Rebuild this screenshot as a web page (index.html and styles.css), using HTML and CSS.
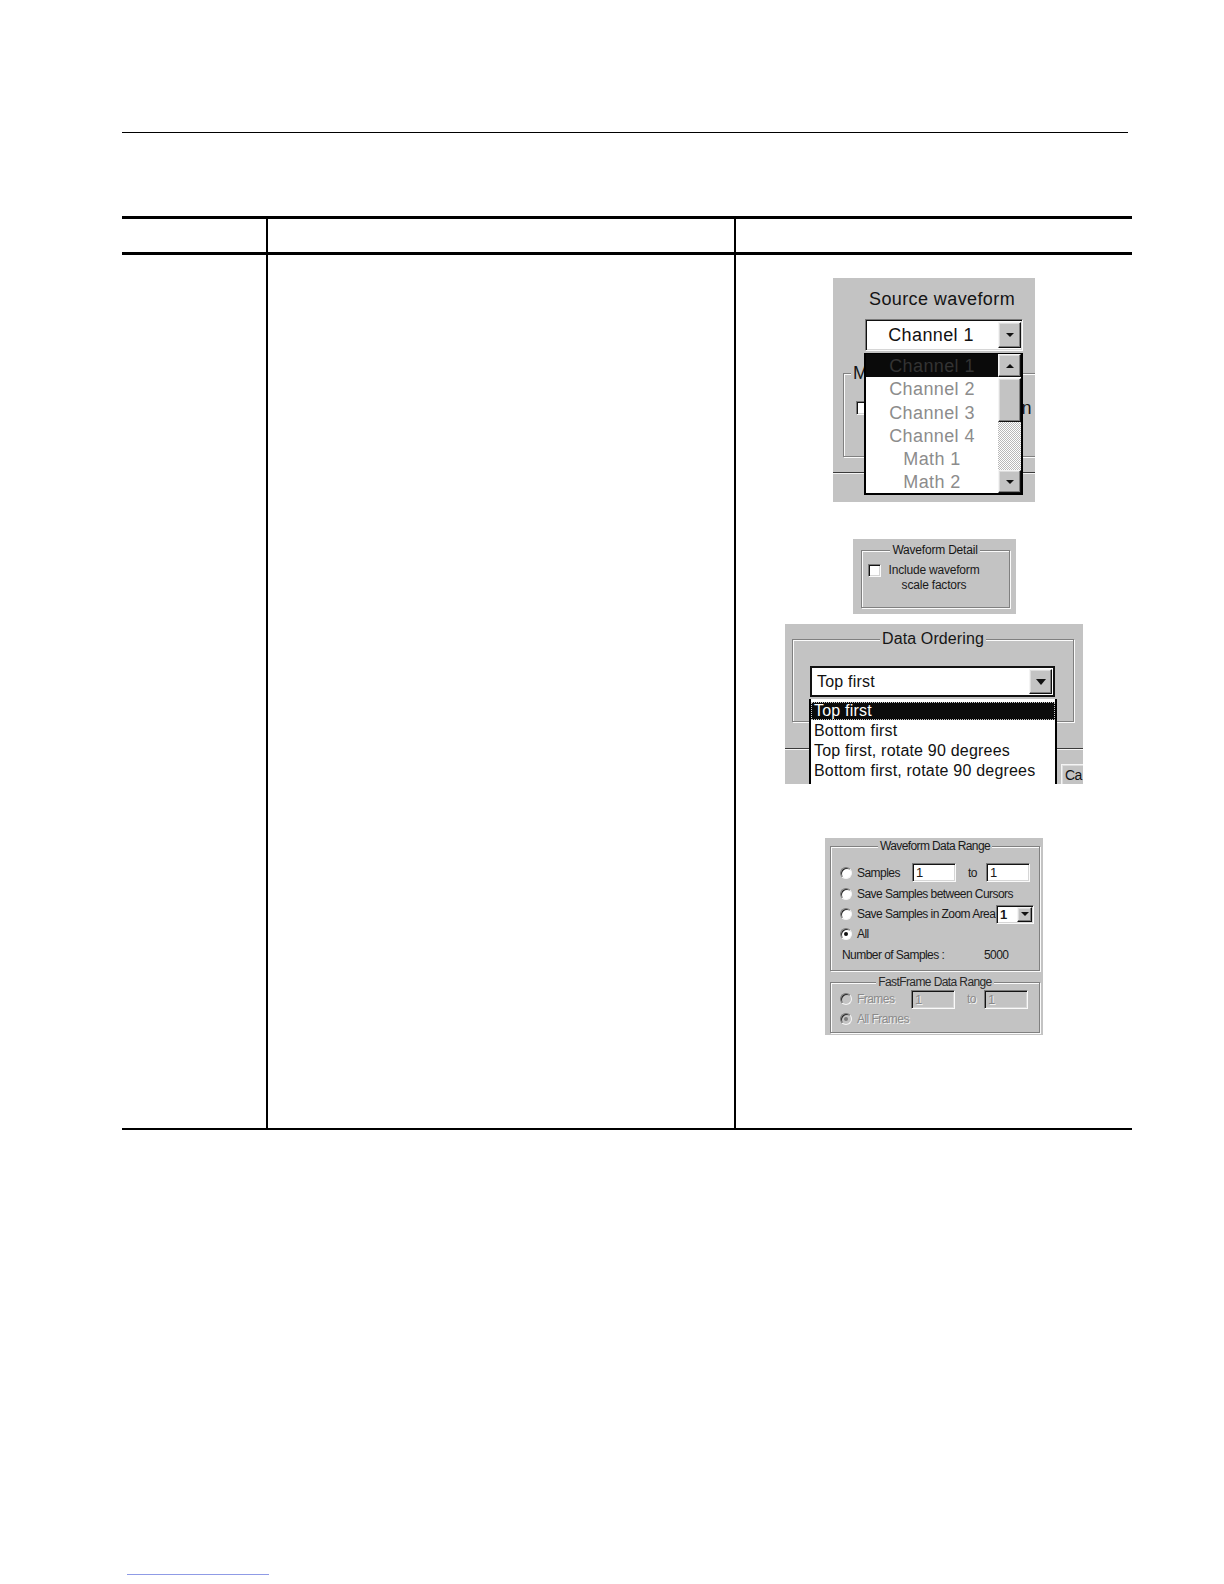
FILE: index.html
```html
<!DOCTYPE html>
<html>
<head>
<meta charset="utf-8">
<title>Save waveform dialog</title>
<link rel="stylesheet" href="styles.css">
</head>
<body>
<div class="page">
  <div class="rule-top"></div>
  <div class="table">
    <div class="row thead">
      <div class="c1"></div>
      <div class="c2"></div>
      <div class="c3"></div>
    </div>
    <div class="row tbody">
      <div class="c1"></div>
      <div class="c2"></div>
      <div class="c3 figs">

        <div class="fig fig1">
          <div class="f1-title">Source waveform</div>
          <div class="combo combo1">
            <div class="combo1-text">Channel 1</div>
            <div class="btn combo1-btn"><span class="arrow-down"></span></div>
          </div>
          <div class="grp grp1">
            <div class="grp1-legend">M</div>
            <div class="grp1-row"><span class="check check1"></span><span class="grp1-tail">n</span></div>
          </div>
          <div class="sep sep1"></div>
          <div class="list1">
            <div class="list1-items">
              <div class="l1-item sel">Channel 1</div>
              <div class="l1-item">Channel 2</div>
              <div class="l1-item">Channel 3</div>
              <div class="l1-item">Channel 4</div>
              <div class="l1-item">Math 1</div>
              <div class="l1-item">Math 2</div>
            </div>
            <div class="sbar">
              <div class="btn sbtn"><span class="arrow-up"></span></div>
              <div class="btn sthumb"></div>
              <div class="strack"></div>
              <div class="btn sbtn sbtn-down"><span class="arrow-down"></span></div>
            </div>
          </div>
        </div>

        <div class="fig fig2">
          <div class="grp grp2">
            <div class="legend l12">Waveform Detail</div>
            <div class="grp2-row">
              <span class="check check2"></span>
              <span class="grp2-text">Include waveform<br>scale factors</span>
            </div>
          </div>
        </div>

        <div class="fig fig3">
          <div class="grp grp3">
            <div class="legend l16">Data Ordering</div>
            <div class="combo3">
              <div class="combo3-text">Top first</div>
              <div class="btn combo3-btn"><span class="arrow-down big"></span></div>
            </div>
          </div>
          <div class="sep sep3"></div>
          <div class="fig3-bottom"><div class="btn cbtn">Ca</div></div>
          <div class="list3">
            <div class="l3-item sel">Top first</div>
            <div class="l3-item">Bottom first</div>
            <div class="l3-item">Top first, rotate 90 degrees</div>
            <div class="l3-item">Bottom first, rotate 90 degrees</div>
          </div>
        </div>

        <div class="fig fig4">
          <div class="grp grp4a">
            <div class="legend l12n">Waveform Data Range</div>
            <div class="r4 r4-first">
              <span class="radio"></span><span class="lbl lbl-samples">Samples</span>
              <span class="inp">1</span><span class="to">to</span><span class="inp">1</span>
            </div>
            <div class="r4"><span class="radio"></span><span class="lbl">Save Samples between Cursors</span></div>
            <div class="r4">
              <span class="radio"></span><span class="lbl lbl-zoom">Save Samples in Zoom Area</span>
              <span class="combo combo4"><span class="combo4-text">1</span><span class="btn combo4-btn"><span class="arrow-down"></span></span></span>
            </div>
            <div class="r4"><span class="radio on"></span><span class="lbl">All</span></div>
            <div class="r4 r4-num"><span class="numlbl">Number of Samples :</span><span class="numval">5000</span></div>
          </div>
          <div class="grp grp4b">
            <div class="legend l12n legend-b">FastFrame Data Range</div>
            <div class="r4b">
              <span class="radio dis"></span><span class="lbl lbl-frames dis-text">Frames</span>
              <span class="inp dis dis-text">1</span><span class="to to-b dis-text">to</span><span class="inp dis dis-text">1</span>
            </div>
            <div class="r4b"><span class="radio dis on"></span><span class="lbl dis-text">All Frames</span></div>
          </div>
        </div>

      </div>
    </div>
  </div>
  <div class="foot-line"></div>
</div>
</body>
</html>
```

FILE: styles.css
```css
html, body {
  margin: 0;
  padding: 0;
  background: #ffffff;
}

body {
  font-family: "Liberation Sans", Arial, sans-serif;
  color: #161616;
}

.page {
  width: 1224px;
  height: 1584px;
  overflow: hidden;
  padding-top: 132px;
  box-sizing: border-box;
}

.rule-top {
  margin-left: 122px;
  width: 1006px;
  height: 1px;
  background: #000;
}

.table {
  margin: 83px 0 0 122px;
  width: 1010px;
  border-top: 3px solid #000;
  border-bottom: 2px solid #000;
}

.row {
  display: grid;
  grid-template-columns: 144px 468px 398px;
}

.thead {
  height: 33px;
  border-bottom: 3px solid #000;
}

.tbody {
  height: 873px;
}

.c2, .c3 {
  border-left: 2px solid #000;
}

/* figures column */
.figs {
  display: flex;
  flex-direction: column;
  align-items: center;
  padding-top: 23px;
}

.fig {
  background: #c3c3c3;
  box-sizing: border-box;
  flex: none;
}

/* generic win controls */
.btn {
  background: #c3c3c3;
  box-sizing: border-box;
  border: 1px solid;
  border-color: #f4f4f4 #101010 #101010 #f4f4f4;
  box-shadow: inset -1px -1px #7e7e7e, inset 1px 1px #dcdcdc;
  display: flex;
  align-items: center;
  justify-content: center;
}

.arrow-down {
  width: 0;
  height: 0;
  border-left: 4px solid transparent;
  border-right: 4px solid transparent;
  border-top: 4px solid #111;
}

.arrow-down.big {
  border-left-width: 5px;
  border-right-width: 5px;
  border-top-width: 6px;
}

.arrow-up {
  width: 0;
  height: 0;
  border-left: 4px solid transparent;
  border-right: 4px solid transparent;
  border-bottom: 4px solid #111;
}

.combo {
  display: flex;
  box-sizing: border-box;
  background: #fff;
  border: 1px solid;
  border-color: #7a7a7a #fafafa #fafafa #7a7a7a;
  box-shadow: inset 1px 1px #111, inset -1px -1px #d6d6d6;
  padding: 2px;
}

.grp {
  box-sizing: border-box;
  border: 1px solid #808080;
  box-shadow: inset 1px 1px #fbfbfb, 1px 1px #fbfbfb;
}

.legend {
  align-self: center;
  background: #c3c3c3;
  padding: 0 2px;
  white-space: nowrap;
}

.l12 {
  margin-top: -8px;
  font-size: 12px;
  line-height: 14px;
  letter-spacing: -0.2px;
}

.l12n {
  margin-top: -8px;
  font-size: 12px;
  line-height: 14px;
  letter-spacing: -0.6px;
}

.l16 {
  margin-top: -10px;
  font-size: 16px;
  line-height: 18px;
  letter-spacing: 0.1px;
}

.check {
  display: block;
  flex: none;
  box-sizing: border-box;
  background: #fff;
  border: 1px solid;
  border-color: #7a7a7a #fafafa #fafafa #7a7a7a;
  box-shadow: inset 1px 1px #141414, inset -1px -1px #d6d6d6;
}

.sep {
  height: 0;
  border-top: 1px solid #3a3a3a;
  border-bottom: 1px solid #f4f4f4;
}

/* ---------- figure 1 ---------- */
.fig1 {
  width: 202px;
  height: 224px;
  padding-top: 11px;
  margin-bottom: 37px;
  position: relative;
  overflow: hidden;
  letter-spacing: 0.4px;
}

.f1-title {
  margin-left: 36px;
  font-size: 18px;
  line-height: 20px;
  color: #141414;
}

.combo1 {
  margin: 10px 0 0 32px;
  width: 158px;
  height: 32px;
  padding-right: 1px;
}

.combo1-text {
  flex: 1;
  text-align: center;
  font-size: 18px;
  line-height: 26px;
  color: #111;
  padding-right: 4px;
}

.combo1-btn {
  width: 23px;
}

.grp1 {
  margin: 22px 0 0 10px;
  width: 200px;
  height: 84px;
}

.grp1-legend {
  width: fit-content;
  margin: -11px 0 0 7px;
  padding: 0 2px;
  background: #c3c3c3;
  font-size: 18px;
  line-height: 20px;
}

.grp1-row {
  display: flex;
  align-items: center;
  justify-content: space-between;
  margin-top: 17px;
  padding: 0 10px 0 12px;
}

.check1 {
  width: 14px;
  height: 14px;
}

.grp1-tail {
  font-size: 18px;
  line-height: 16px;
}

.sep1 {
  margin-top: 15px;
}

.list1 {
  position: absolute;
  left: 31px;
  top: 75px;
  width: 159px;
  height: 142px;
  box-sizing: border-box;
  background: #fff;
  border: 2px solid #000;
  border-top-width: 1px;
  display: flex;
}

.list1-items {
  flex: 1;
}

.l1-item {
  height: 23.3px;
  line-height: 25px;
  text-align: center;
  font-size: 18px;
  color: #8c8c8c;
  overflow: hidden;
}

.l1-item.sel {
  background: #0a0a0a;
  color: #333;
}

.sbar {
  width: 23px;
  display: flex;
  flex-direction: column;
}

.sbtn {
  height: 23px;
}

.sbtn-down {
  height: 23px;
}

.sthumb {
  height: 44px;
  margin-top: 1px;
}

.strack {
  height: 48px;
  background: repeating-conic-gradient(#ffffff 0 25%, #b8b8b8 0 50%) 0 0 / 2px 2px;
}

/* ---------- figure 2 ---------- */
.fig2 {
  width: 163px;
  height: 75px;
  padding: 11px 0 0 8px;
  margin-bottom: 10px;
}

.grp2 {
  width: 149px;
  height: 58px;
  display: flex;
  flex-direction: column;
}

.grp2-row {
  display: flex;
  align-items: flex-start;
  margin-top: 6px;
  padding-left: 6px;
}

.check2 {
  width: 13px;
  height: 13px;
  margin-top: 1px;
}

.grp2-text {
  margin-left: 7px;
  width: 93px;
  text-align: center;
  font-size: 12px;
  line-height: 15px;
  letter-spacing: -0.2px;
  color: #1a1a1a;
}

/* ---------- figure 3 ---------- */
.fig3 {
  width: 298px;
  height: 160px;
  padding: 15px 0 0 7px;
  margin-bottom: 54px;
  position: relative;
  overflow: hidden;
}

.grp3 {
  width: 282px;
  height: 83px;
  display: flex;
  flex-direction: column;
}

.combo3 {
  margin: 18px 0 0 17px;
  width: 245px;
  height: 31px;
  box-sizing: border-box;
  display: flex;
  background: #fff;
  border: 2px solid #121212;
  padding: 1px;
}

.combo3-text {
  flex: 1;
  padding-left: 4px;
  font-size: 16px;
  line-height: 25px;
  letter-spacing: 0.2px;
  color: #111;
}

.combo3-btn {
  width: 23px;
}

.sep3 {
  margin: 26px 0 0 -7px;
  width: 298px;
}

.fig3-bottom {
  margin-top: 14px;
}

.cbtn {
  margin-left: 269px;
  width: 22px;
  height: 20px;
  align-items: flex-start;
  justify-content: flex-start;
  padding: 2px 0 0 3px;
  font-size: 14px;
  line-height: 16px;
  letter-spacing: -0.5px;
  color: #111;
  box-shadow: inset 1px 1px #dcdcdc;
  border-right: 0;
  border-bottom: 0;
}

.list3 {
  position: absolute;
  left: 24px;
  top: 75px;
  width: 248px;
  height: 100px;
  box-sizing: border-box;
  background: #fff;
  border-left: 2px solid #000;
  border-right: 2px solid #000;
  padding-top: 2px;
}

.l3-item {
  height: 20px;
  line-height: 20px;
  padding-left: 3px;
  font-size: 16px;
  letter-spacing: 0.2px;
  color: #111;
  white-space: nowrap;
}

.l3-item.sel {
  height: 18px;
  line-height: 18px;
  margin: 1px 0;
  background: #0b0b0b;
  color: #fff;
  outline: 1px dotted #c8c8c8;
  outline-offset: -1px;
}

/* ---------- figure 4 ---------- */
.fig4 {
  width: 218px;
  height: 197px;
  padding: 8px 0 0 5px;
  font-size: 12px;
  letter-spacing: -0.55px;
  color: #1a1a1a;
}

.grp4a {
  width: 210px;
  height: 125px;
  display: flex;
  flex-direction: column;
}

.r4 {
  display: flex;
  align-items: center;
  height: 20px;
  padding-left: 9px;
}

.r4-first {
  margin-top: 8px;
  height: 23px;
}

.r4-num {
  margin-top: 1px;
  padding-left: 11px;
}

.radio {
  display: block;
  flex: none;
  width: 12px;
  height: 12px;
  box-sizing: border-box;
  border-radius: 50%;
  background: #fff;
  border: 1px solid;
  border-color: #7a7a7a #f6f6f6 #f6f6f6 #7a7a7a;
  box-shadow: inset 1px 1px #2a2a2a;
  position: relative;
}

.radio.on::after {
  content: "";
  position: absolute;
  left: 3px;
  top: 3px;
  width: 4px;
  height: 4px;
  border-radius: 50%;
  background: #111;
}

.radio.dis {
  background: #c3c3c3;
}

.radio.dis.on::after {
  background: #7d7d7d;
}

.lbl {
  margin-left: 5px;
  white-space: nowrap;
}

.lbl-samples {
  width: 55px;
}

.lbl-frames {
  width: 54px;
}

.lbl-zoom {
  width: 139px;
}

.inp {
  display: block;
  flex: none;
  width: 44px;
  height: 19px;
  box-sizing: border-box;
  background: #fff;
  border: 1px solid;
  border-color: #7a7a7a #fafafa #fafafa #7a7a7a;
  box-shadow: inset 1px 1px #141414, inset -1px -1px #d6d6d6;
  padding-left: 3px;
  font-size: 13px;
  line-height: 17px;
  letter-spacing: 0;
}

.inp.dis {
  background: #c3c3c3;
}

.to {
  width: 18px;
  padding-left: 12px;
}

.to-b {
  width: 17px;
}

.combo4 {
  width: 38px;
  height: 19px;
  padding: 1px;
}

.combo4-text {
  flex: 1;
  padding-left: 2px;
  font-weight: bold;
  font-size: 13px;
  line-height: 15px;
  letter-spacing: 0;
}

.combo4-btn {
  width: 15px;
}

.numlbl {
  width: 142px;
  white-space: nowrap;
}

.grp4b {
  margin-top: 11px;
  width: 210px;
  height: 51px;
  display: flex;
  flex-direction: column;
}

.legend-b {
  color: #2a2a2a;
}

.r4b {
  display: flex;
  align-items: center;
  height: 20px;
  padding-left: 9px;
}

.r4b:first-of-type {
  margin-top: 1px;
}

.dis-text {
  color: #8a8a8a;
  text-shadow: 1px 1px #f2f2f2;
}

.foot-line {
  margin: 444px 0 0 127px;
  width: 142px;
  height: 1px;
  background: #8f9be6;
}
```
